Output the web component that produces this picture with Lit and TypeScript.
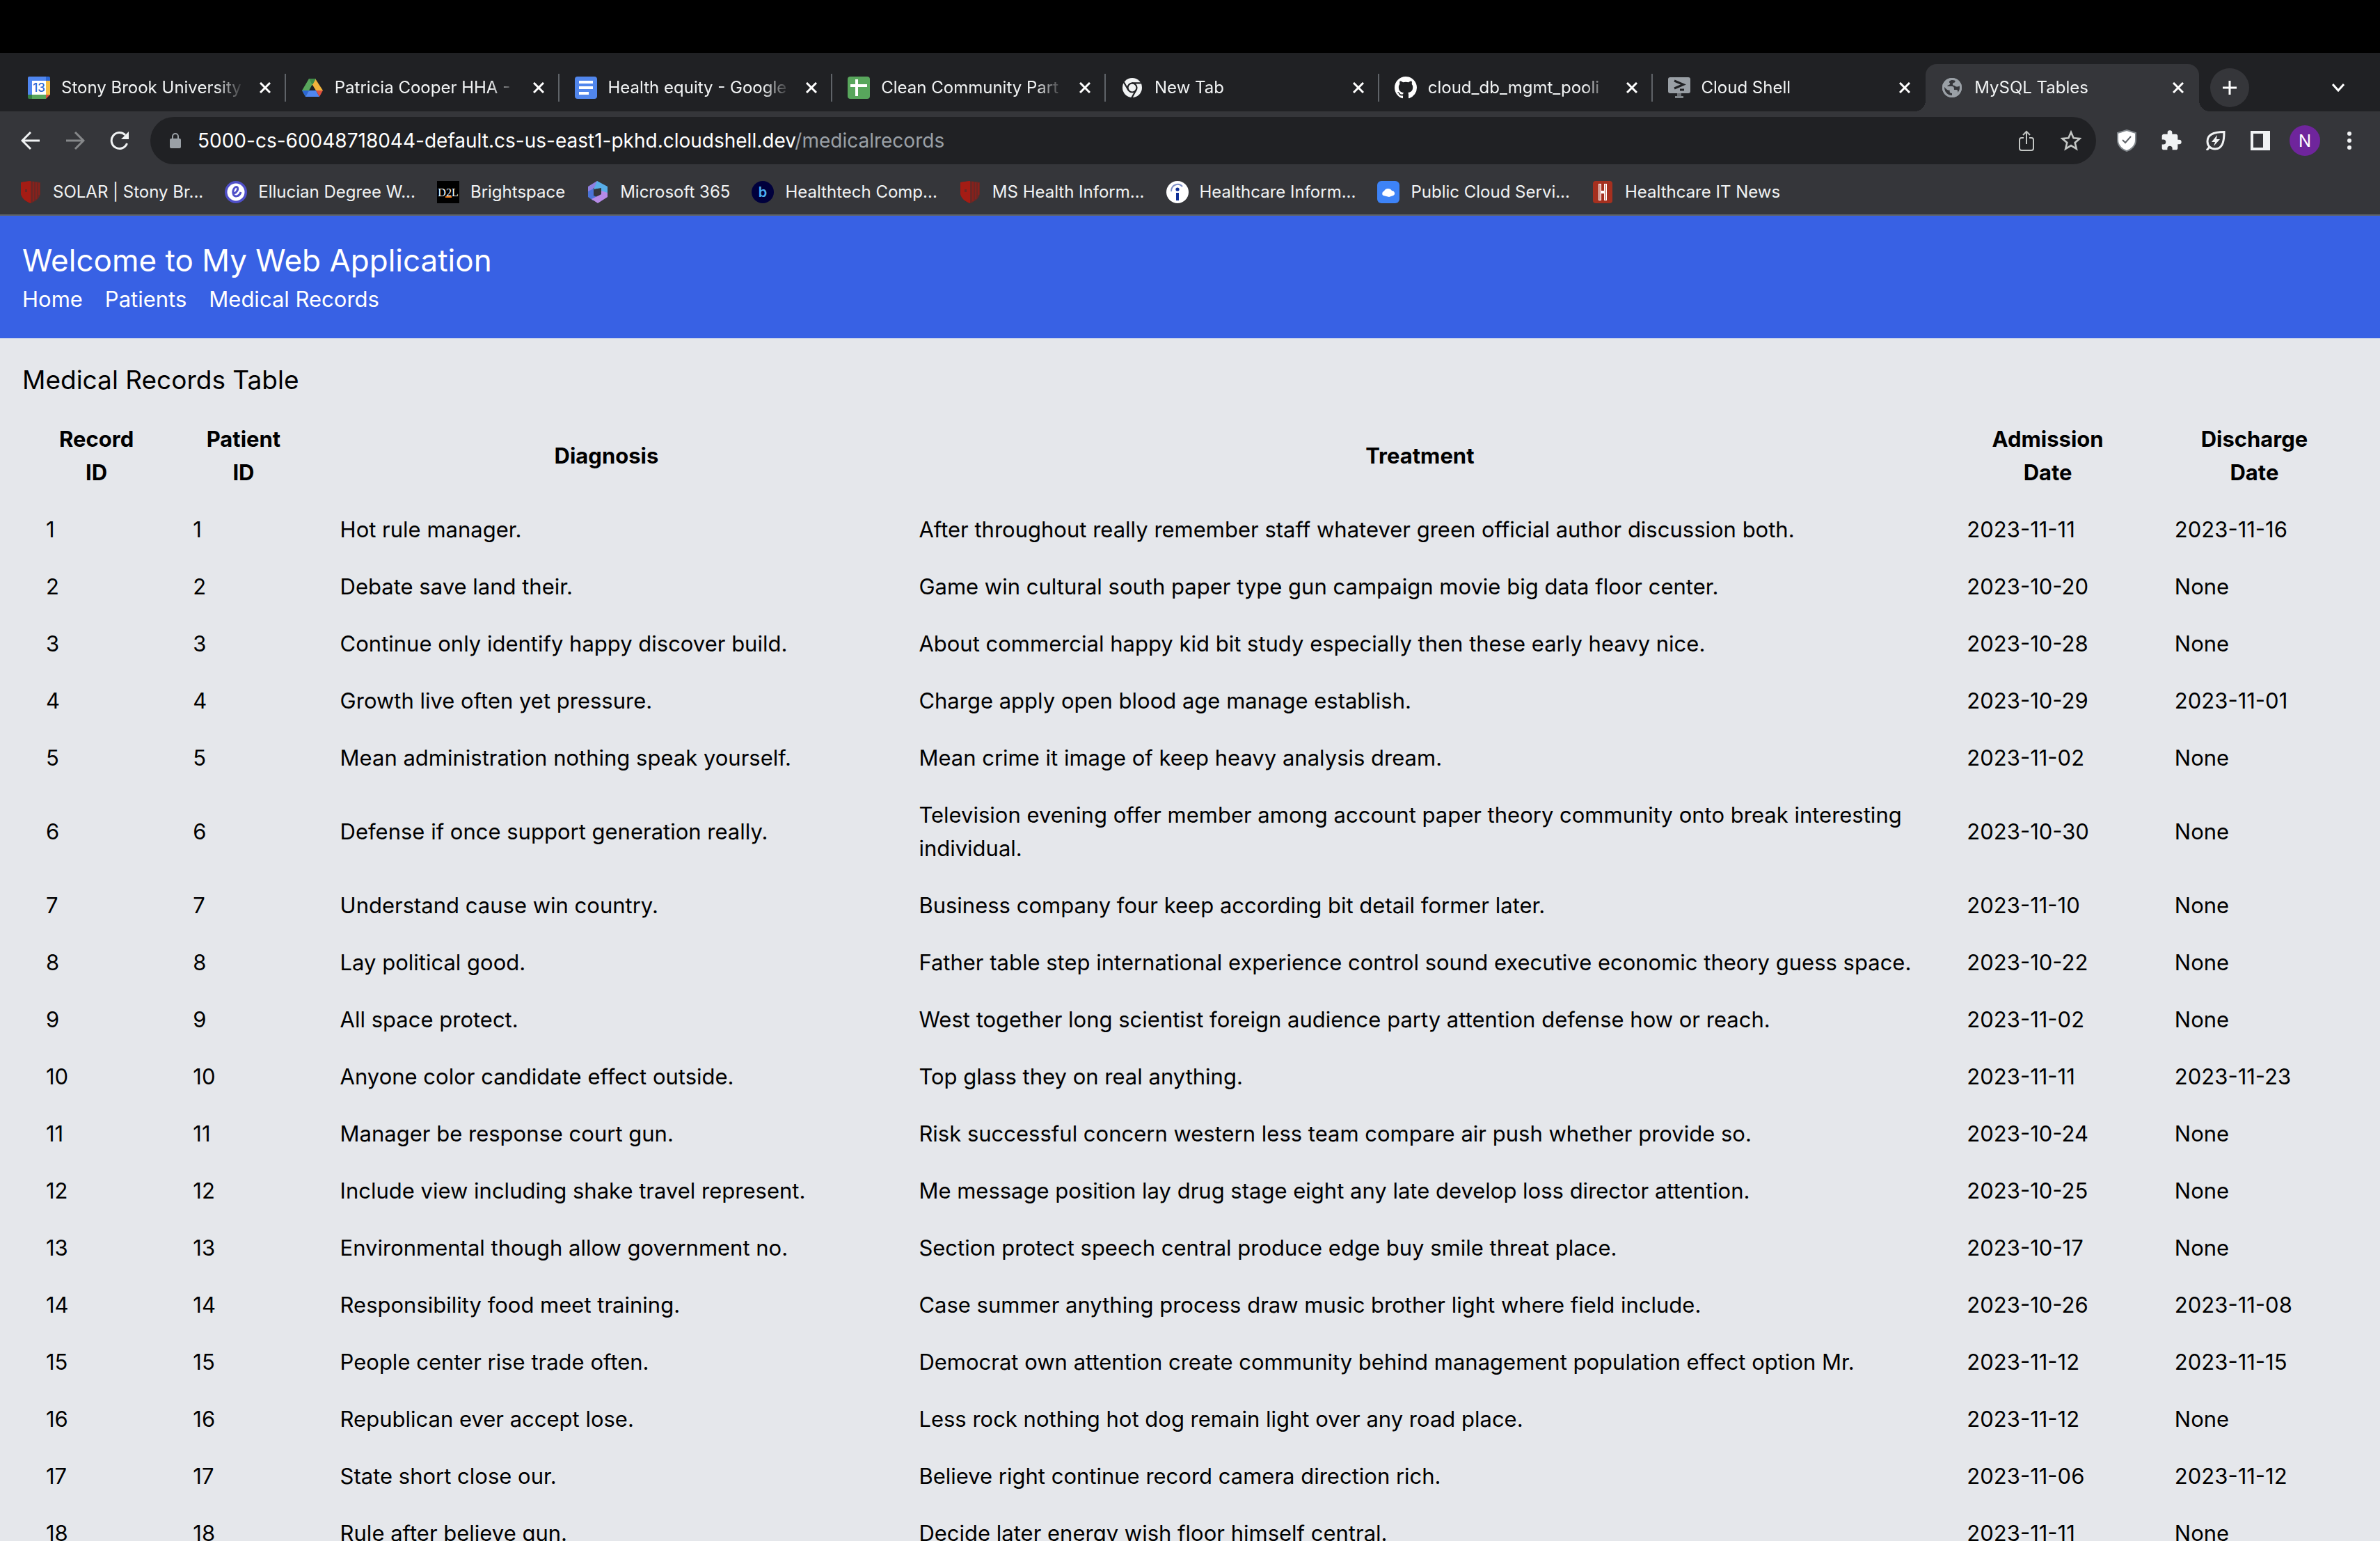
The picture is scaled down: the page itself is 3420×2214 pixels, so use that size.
import { LitElement, html, css, svg, TemplateResult } from "lit";
import { customElement, property } from "lit/decorators.js";
import { classMap } from "lit/directives/class-map.js";

const FONT = css`"Inter", "Liberation Sans", sans-serif`;

/* ---------- favicons, 32 x 32 ---------- */

const shieldMark = svg`
  <path d="M2 2C12-0 20-0 30 2V19C28 26 22 30 16 32C10 30 4 26 2 19Z" fill="#6b2724"/>
  <path d="M2 2C8 1 12 0 16 0V32C10 30 4 26 2 19Z" fill="#a51c14"/>
  <path d="M20 1V29M24 2V26M28 3V20" stroke="#a51c14" stroke-width="1"/>
  <rect x="8" y="12" width="3" height="4" fill="#6b2724"/>`;

const ICONS: Record<string, TemplateResult> = {
  calendar: svg`
    <path d="M2 0H26V8H0V2Q0 0 2 0Z" fill="#4f86f0"/>
    <path d="M26 0H30Q32 0 32 2V6H26Z" fill="#2b66d3"/>
    <rect x="0" y="6" width="7" height="20" fill="#4f86f0"/>
    <rect x="26" y="6" width="6" height="20" fill="#f2bd42"/>
    <path d="M0 26H6V32H2Q0 32 0 30Z" fill="#358044"/>
    <rect x="6" y="26" width="20" height="6" fill="#58a65c"/>
    <path d="M26 26H32L26 32Z" fill="#d85140"/>
    <rect x="6" y="6" width="20" height="20" fill="#fff"/>
    <text x="16" y="22" text-anchor="middle" font-size="17" font-weight="500" fill="#2b66d3">13</text>`,
  drive: svg`
    <path d="M11 3H21L16 11L11 20L6 29L1 20Z" fill="#58a65c"/>
    <path d="M20 3L31 20H21L15 11Z" fill="#f1b33c"/>
    <path d="M11 3H21L16 12Z" fill="#3f8a48"/>
    <path d="M1 20H11L6 29Z" fill="#2b66d3"/>
    <path d="M11 20H21L26 29H6Z" fill="#4f86f0"/>
    <path d="M21 20H31L26 29Z" fill="#dc5040"/>
    <path d="M16 12L20.500 20H11.500Z" fill="#202124"/>`,
  docs: svg`
    <rect width="32" height="32" rx="4" fill="#5186ec"/>
    <path d="M6 8H26M6 16H26M6 24H20" stroke="#fff" stroke-width="4"/>`,
  sheets: svg`
    <rect width="32" height="32" rx="4" fill="#58a65c"/>
    <path d="M4 13H28M13 4V28" stroke="#fff" stroke-width="4"/>`,
  chrome: svg`
    <circle cx="16" cy="16" r="14" fill="#f1f3f4"/>
    <circle cx="16" cy="16" r="6.500" fill="none" stroke="#202124" stroke-width="2.200"/>
    <path d="M15 9.300H28.500M10.400 19.300L3.800 8M21.600 19.200L15 31" fill="none" stroke="#202124" stroke-width="2.200"/>`,
  github: svg`
    <path transform="scale(2)" fill="#fff" d="M8 0C3.580 0 0 3.580 0 8c0 3.540 2.290 6.530 5.470 7.590.4.070.550-.170.550-.380 0-.190-.010-.820-.010-1.490-2.010.370-2.530-.490-2.690-.940-.090-.230-.480-.940-.820-1.130-.280-.150-.680-.520-.010-.530.630-.010 1.080.580 1.230.820.720 1.210 1.870.870 2.330.660.070-.520.280-.870.510-1.070-1.780-.200-3.640-.890-3.640-3.950 0-.870.310-1.590.820-2.150-.080-.200-.360-1.020.080-2.120 0 0 .670-.210 2.200.820.640-.180 1.320-.270 2-.270s1.360.090 2 .270c1.530-1.040 2.200-.820 2.200-.820.440 1.100.160 1.920.080 2.120.510.560.820 1.270.820 2.150 0 3.070-1.870 3.750-3.650 3.950.290.250.540.730.540 1.480 0 1.070-.010 1.930-.010 2.200 0 .210.150.460.550.380A8.013 8.013 0 0 0 16 8c0-4.420-3.580-8-8-8Z"/>`,
  shell: svg`
    <rect x="0" y="1" width="32" height="23" rx="3" fill="#9aa0a6"/>
    <path d="M9 6L22 11.500L9 17" fill="none" stroke="#202124" stroke-width="3"/>
    <path d="M17 19H23" stroke="#202124" stroke-width="3"/>
    <path d="M16 24V30" stroke="#6b6f74" stroke-width="6"/>
    <path d="M10 29.500H22" stroke="#80868b" stroke-width="3"/>`,
  globe: svg`
    <circle cx="16" cy="16" r="14" fill="#9aa0a6"/>
    <path d="M15 5C12 6 11 8 13 9.500C14 12 10 12 9 14H16C19 14 19 17 19 19H22C24 19 25 21 24 23C27 21 28.500 17 27 13C25 15 21 15 20 13C17 13 16 11 18 9C21 9 21 6 20 5C18 4.500 16 4.500 15 5Z" fill="#35363a"/>
    <path d="M5 15C4 22 9 28 16 28V24C13 24 12 22 13 20C9 20 7 17 5 15Z" fill="#35363a"/>
    <circle cx="16" cy="16" r="12.500" fill="none" stroke="#9aa0a6" stroke-width="3"/>`,
  shieldmark: shieldMark,
  ellucian: svg`
    <circle cx="16" cy="16" r="16" fill="#5050c8"/>
    <circle cx="16" cy="16" r="12.500" fill="#fff"/>
    <path d="M13 18C17 17 20 12 18 9C15 7 11 12 12 18C13 24 21 23 23 16" fill="none" stroke="#5050c8" stroke-width="3"/>`,
  d2l: svg`
    <rect width="32" height="32" fill="#000"/>
    <text x="16" y="22" text-anchor="middle" font-family="Liberation Serif, serif" font-size="16" fill="#fff">D2L</text>
    <rect x="12" y="22" width="9" height="2" fill="#e87511"/>`,
  m365: svg`
    <path d="M15 0L2 8V22L9 26V11L19 5Z" fill="#8f7fe0"/>
    <path d="M15 0L30 8V20L21 14V10L10 12Z" fill="#58aee8"/>
    <path d="M2 15L10 11V21L17 24L9 28L2 23Z" fill="#4a73d6"/>
    <path d="M30 17V23L16 32L7 26L21 19L21 14Z" fill="#b58ae6"/>
    <circle cx="16" cy="16" r="5" fill="#35363a"/>`,
  healthtech: svg`
    <circle cx="16" cy="16" r="16" fill="#00003c"/>
    <text x="16" y="23" text-anchor="middle" font-size="20" font-weight="600" fill="#4db3f5">b</text>`,
  info: svg`
    <circle cx="16" cy="16" r="16" fill="#fff"/>
    <path d="M7 15C7 5 18 2 23 8" fill="none" stroke="#7d8fc7" stroke-width="2"/>
    <circle cx="16" cy="12" r="2.600" fill="#0f2f96"/>
    <rect x="14" y="17" width="4" height="11" fill="#0f2f96"/>`,
  cloud: svg`
    <rect width="32" height="32" rx="6" fill="#3d83f7"/>
    <path d="M9 21A3.500 3.500 0 0 1 10 14.500A6 5.500 0 0 1 21 14A3.700 3.700 0 0 1 23 21L17 23Z" fill="#fff"/>`,
  hit: svg`
    <rect x="2" y="0" width="28" height="32" rx="4" fill="#a5301f"/>
    <path d="M12 4V28M20 4V28M12 16H20" stroke="#fff" stroke-width="4"/>
    <path d="M12 5V27M20 5V27" stroke="#a5301f" stroke-width="1"/>`,
};

const icon = (name: string) =>
  html`<svg class="favicon" viewBox="0 0 32 32" width="32" height="32" aria-hidden="true">${ICONS[name]}</svg>`;

/* ---------- browser tab strip ---------- */

interface Tab { icon: string; title: string; active?: boolean; divider?: boolean }

const TABS: Tab[] = [
  { icon: "calendar", title: "Stony Brook University", divider: true },
  { icon: "drive", title: "Patricia Cooper HHA -", divider: true },
  { icon: "docs", title: "Health equity - Google", divider: true },
  { icon: "sheets", title: "Clean Community Part", divider: true },
  { icon: "chrome", title: "New Tab", divider: true },
  { icon: "github", title: "cloud_db_mgmt_pooli", divider: true },
  { icon: "shell", title: "Cloud Shell" },
  { icon: "globe", title: "MySQL Tables", active: true },
];

@customElement("tab-strip")
export class TabStrip extends LitElement {
  static styles = css`
    :host { display: block; background: #202124; font-family: ${FONT}; }
    .strip { display: flex; align-items: center; height: 84px; padding: 0 40px 0 18px; box-sizing: border-box; }
    .tabs { flex: 1; display: flex; align-self: stretch; padding-top: 16px; margin-right: 16px; min-width: 0; }
    .tab { position: relative; flex: 1 1 0; min-width: 0; display: flex; align-items: center; gap: 16px; padding: 0 22px; color: #e8eaed; box-sizing: border-box; }
    .divider::after { content: ""; position: absolute; right: 0; top: 14px; width: 2px; height: 40px; background: #5f6368; }
    .active { background: #35363a; border-radius: 16px 16px 0 0; }
    .active::before, .active::after { content: ""; position: absolute; bottom: 0; width: 16px; height: 16px; }
    .active::before { left: -16px; background: radial-gradient(circle at 0 0, transparent 16px, #35363a 16px); }
    .active::after { right: -16px; background: radial-gradient(circle at 100% 0, transparent 16px, #35363a 16px); }
    .favicon { flex: none; display: block; }
    .title { flex: 1; min-width: 0; white-space: nowrap; font-size: 24px; line-height: 32px; color: #f1f3f4;
      mask-image: linear-gradient(to right, #000 calc(100% - 46px), transparent calc(100% - 6px)); }
    .close, .add, .more { flex: none; padding: 0; border: 0; background: none; color: #fff; display: flex; align-items: center; justify-content: center; }
    .close { width: 16px; height: 16px; }
    .add { width: 56px; height: 56px; margin-top: 16px; border-radius: 50%; background: #35363a; }
    .more { width: 40px; height: 40px; margin: 16px 0 0 108px; }
  `;
  render() {
    return html`
      <div class="strip">
        <div class="tabs" role="tablist">
          ${TABS.map((t) => html`
            <div class=${classMap({ tab: true, active: !!t.active, divider: !!t.divider })} role="tab" aria-selected=${t.active ? "true" : "false"}>
              ${icon(t.icon)}
              <span class="title">${t.title}</span>
              <button class="close" aria-label="Close tab">
                <svg width="16" height="16" viewBox="0 0 16 16"><path d="M1 1L15 15M15 1L1 15" stroke="currentColor" stroke-width="3"/></svg>
              </button>
            </div>`)}
        </div>
        <button class="add" aria-label="New tab">
          <svg width="20" height="20" viewBox="0 0 20 20"><path d="M10 0V20M0 10H20" stroke="currentColor" stroke-width="3"/></svg>
        </button>
        <button class="more" aria-label="Search tabs">
          <svg width="18" height="12" viewBox="0 0 18 12"><path d="M1 1L9 10L17 1" fill="none" stroke="currentColor" stroke-width="3"/></svg>
        </button>
      </div>`;
  }
}

/* ---------- address bar ---------- */

@customElement("address-bar")
export class AddressBar extends LitElement {
  static styles = css`
    :host { display: block; background: #35363a; font-family: ${FONT}; }
    .bar { display: flex; align-items: center; gap: 24px; padding: 8px 24px; }
    .tools { display: flex; align-items: center; gap: 24px; }
    button { flex: none; width: 40px; height: 40px; padding: 0; border: 0; background: none; color: #f1f3f4; display: flex; align-items: center; justify-content: center; }
    .muted { color: #86888a; }
    .box { flex: 1; min-width: 0; display: flex; align-items: center; height: 68px; padding: 0 16px 0 28px; border-radius: 34px; background: #202124; box-sizing: border-box; gap: 24px; }
    .lock { flex: none; }
    .url { flex: 1; min-width: 0; font-size: 28px; line-height: 40px; color: #9aa0a6; white-space: nowrap; }
    .host { color: #fff; }
    .soft { color: #c4c7c5; }
    .avatar { width: 44px; height: 44px; margin: 0 -2px; border-radius: 50%; background: #6f259c; color: #fff; font-size: 24px; font-family: inherit; }
  `;
  render() {
    return html`
      <div class="bar">
        <nav class="tools">
          <button aria-label="Back"><svg width="28" height="28" viewBox="0 0 28 28"><path d="M27 14H3M14 2L2 14L14 26" fill="none" stroke="currentColor" stroke-width="3"/></svg></button>
          <button class="muted" aria-label="Forward"><svg width="28" height="28" viewBox="0 0 28 28"><path d="M1 14H25M14 2L26 14L14 26" fill="none" stroke="currentColor" stroke-width="3"/></svg></button>
          <button aria-label="Reload"><svg width="28" height="28" viewBox="0 0 28 28"><path d="M24.500 18A11.500 11.500 0 1 1 22 6" fill="none" stroke="currentColor" stroke-width="3"/><path d="M27 1V12H16Z" fill="currentColor"/></svg></button>
        </nav>
        <div class="box">
          <svg class="lock" width="16" height="22" viewBox="0 0 16 22"><path d="M4 9V5A4 4 0 0 1 12 5V9" fill="none" stroke="#9aa0a6" stroke-width="2"/><rect y="8" width="16" height="14" rx="2" fill="#9aa0a6"/></svg>
          <span class="url"><span class="host">5000-cs-60048718044-default.cs-us-east1-pkhd.cloudshell.dev</span>/medicalrecords</span>
          <div class="tools">
            <button class="soft" aria-label="Share"><svg width="22" height="30" viewBox="0 0 22 30"><path d="M7 11H4A3 3 0 0 0 1 14V26A3 3 0 0 0 4 29H18A3 3 0 0 0 21 26V14A3 3 0 0 0 18 11H15M11 20V3M6 7L11 2L16 7" fill="none" stroke="currentColor" stroke-width="2"/></svg></button>
            <button class="soft" aria-label="Bookmark this page"><svg width="30" height="30" viewBox="0 0 30 30"><path d="M15 3L18.600 11.300L27.500 12.100L20.700 18L22.800 26.800L15 22.100L7.200 26.800L9.300 18L2.500 12.100L11.400 11.300Z" fill="none" stroke="currentColor" stroke-width="2.600"/></svg></button>
          </div>
        </div>
        <div class="tools">
          <button aria-label="Shield"><svg width="28" height="32" viewBox="0 0 28 32"><path d="M14 1L27 5V15C27 23 21 29 14 31C7 29 1 23 1 15V5Z" fill="#fff" stroke="#80868b" stroke-width="2"/><path d="M8 15L12 19L20 10" fill="none" stroke="#5f6368" stroke-width="2"/></svg></button>
          <button aria-label="Extensions"><svg width="32" height="32" viewBox="0 0 24 24"><path fill="currentColor" d="M20.500 11H19V7c0-1.100-.9-2-2-2h-4V3.500a2.500 2.500 0 0 0-5 0V5H4c-1.100 0-2 .9-2 2v3.800h1.500a2.700 2.700 0 0 1 0 5.400H2V20c0 1.100.9 2 2 2h3.800v-1.500a2.700 2.700 0 0 1 5.400 0V22H17c1.100 0 2-.9 2-2v-4h1.500a2.500 2.500 0 0 0 0-5Z"/></svg></button>
          <button aria-label="Energy saver"><svg width="28" height="28" viewBox="0 0 28 28"><path d="M26 1.500C17 1.500 2 3 2 15C2 21 6 26 13 26C25 26 26 12 26 1.500ZM6 22L1 28" fill="none" stroke="currentColor" stroke-width="3"/><path d="M16 6L8 16H13L11 22L20 12H15Z" fill="currentColor"/></svg></button>
          <button aria-label="Side panel"><svg width="28" height="28" viewBox="0 0 28 28"><path d="M0 0H28V28H0ZM4 4V24H18V4Z" fill="currentColor" fill-rule="evenodd"/></svg></button>
          <button class="avatar" aria-label="Profile">N</button>
          <button aria-label="Menu"><svg width="6" height="28" viewBox="0 0 6 28"><circle cx="3" cy="4" r="3" fill="currentColor"/><circle cx="3" cy="14" r="3" fill="currentColor"/><circle cx="3" cy="24" r="3" fill="currentColor"/></svg></button>
        </div>
      </div>`;
  }
}

/* ---------- bookmarks ---------- */

const BOOKMARKS: [string, string][] = [
  ["shieldmark", "SOLAR | Stony Br..."],
  ["ellucian", "Ellucian Degree W..."],
  ["d2l", "Brightspace"],
  ["m365", "Microsoft 365"],
  ["healthtech", "Healthtech Comp..."],
  ["shieldmark", "MS Health Inform..."],
  ["info", "Healthcare Inform..."],
  ["cloud", "Public Cloud Servi..."],
  ["hit", "Healthcare IT News"],
];

@customElement("bookmark-bar")
export class BookmarkBar extends LitElement {
  static styles = css`
    :host { display: block; background: #35363a; border-bottom: 2px solid #5f6368; font-family: ${FONT}; }
    .bar { display: flex; align-items: center; gap: 31px; height: 64px; padding: 0 28px; }
    .mark { display: flex; align-items: center; gap: 16px; color: #f1f3f4; text-decoration: none; font-size: 24px; line-height: 32px; white-space: nowrap; }
    .favicon { flex: none; display: block; }
  `;
  render() {
    return html`<nav class="bar">${BOOKMARKS.map(([i, label]) => html`<a class="mark" href="#">${icon(i)}<span>${label}</span></a>`)}</nav>`;
  }
}

/* ---------- page ---------- */

type Row = [string, string, string, string];

const RECORDS: Row[] = [
  ["Hot rule manager.", "After throughout really remember staff whatever green official author discussion both.", "2023-11-11", "2023-11-16"],
  ["Debate save land their.", "Game win cultural south paper type gun campaign movie big data floor center.", "2023-10-20", "None"],
  ["Continue only identify happy discover build.", "About commercial happy kid bit study especially then these early heavy nice.", "2023-10-28", "None"],
  ["Growth live often yet pressure.", "Charge apply open blood age manage establish.", "2023-10-29", "2023-11-01"],
  ["Mean administration nothing speak yourself.", "Mean crime it image of keep heavy analysis dream.", "2023-11-02", "None"],
  ["Defense if once support generation really.", "Television evening offer member among account paper theory community onto break interesting individual.", "2023-10-30", "None"],
  ["Understand cause win country.", "Business company four keep according bit detail former later.", "2023-11-10", "None"],
  ["Lay political good.", "Father table step international experience control sound executive economic theory guess space.", "2023-10-22", "None"],
  ["All space protect.", "West together long scientist foreign audience party attention defense how or reach.", "2023-11-02", "None"],
  ["Anyone color candidate effect outside.", "Top glass they on real anything.", "2023-11-11", "2023-11-23"],
  ["Manager be response court gun.", "Risk successful concern western less team compare air push whether provide so.", "2023-10-24", "None"],
  ["Include view including shake travel represent.", "Me message position lay drug stage eight any late develop loss director attention.", "2023-10-25", "None"],
  ["Environmental though allow government no.", "Section protect speech central produce edge buy smile threat place.", "2023-10-17", "None"],
  ["Responsibility food meet training.", "Case summer anything process draw music brother light where field include.", "2023-10-26", "2023-11-08"],
  ["People center rise trade often.", "Democrat own attention create community behind management population effect option Mr.", "2023-11-12", "2023-11-15"],
  ["Republican ever accept lose.", "Less rock nothing hot dog remain light over any road place.", "2023-11-12", "None"],
  ["State short close our.", "Believe right continue record camera direction rich.", "2023-11-06", "2023-11-12"],
  ["Rule after believe gun.", "Decide later energy wish floor himself central.", "2023-11-11", "None"],
];

@customElement("records-table")
export class RecordsTable extends LitElement {
  @property({ attribute: false }) rows: Row[] = [];
  static styles = css`
    :host { display: block; }
    table { width: 100%; table-layout: fixed; border-collapse: collapse; font-size: 31px; line-height: 48px; }
    th, td { border: 2px solid #e5e7eb; box-sizing: border-box; }
    th { padding: 16px 40px; font-weight: 700; text-align: center; }
    td { padding: 16px 32px; text-align: left; }
    .id { width: 6.3%; }
    .diagnosis { width: 24.8%; }
    .admission { width: 8.9%; }
    .discharge { width: 8.8%; }
  `;
  render() {
    return html`
      <table>
        <thead>
          <tr>
            <th class="id">Record ID</th><th class="id">Patient ID</th><th class="diagnosis">Diagnosis</th>
            <th>Treatment</th><th class="admission">Admission Date</th><th class="discharge">Discharge Date</th>
          </tr>
        </thead>
        <tbody>
          ${this.rows.map((r, i) => html`<tr><td>${i + 1}</td><td>${i + 1}</td>${r.map((c) => html`<td>${c}</td>`)}</tr>`)}
        </tbody>
      </table>`;
  }
}

@customElement("app-root")
export class AppRoot extends LitElement {
  static styles = css`
    :host { display: block; height: 100vh; overflow: hidden; background: #e5e7eb; color: #000; font-family: ${FONT}; }
    .menubar { height: 76px; background: #000; }
    header { background: #3861e4; color: #fff; padding: 32px; }
    h1, h2 { margin: 0; font-weight: 400; }
    h1 { font-size: 44px; line-height: 64px; }
    h2 { font-size: 37px; line-height: 56px; margin-bottom: 15px; }
    .links { display: flex; gap: 32px; margin: 0; padding: 0; list-style: none; font-size: 31px; line-height: 48px; }
    .links a { color: inherit; text-decoration: none; }
    main { padding: 32px; }
  `;
  render() {
    return html`
      <div class="menubar"></div>
      <tab-strip></tab-strip>
      <address-bar></address-bar>
      <bookmark-bar></bookmark-bar>
      <header>
        <h1>Welcome to My Web Application</h1>
        <nav><ul class="links">
          <li><a href="#">Home</a></li><li><a href="#">Patients</a></li><li><a href="#">Medical Records</a></li>
        </ul></nav>
      </header>
      <main>
        <h2>Medical Records Table</h2>
        <records-table .rows=${RECORDS}></records-table>
      </main>`;
  }
}
